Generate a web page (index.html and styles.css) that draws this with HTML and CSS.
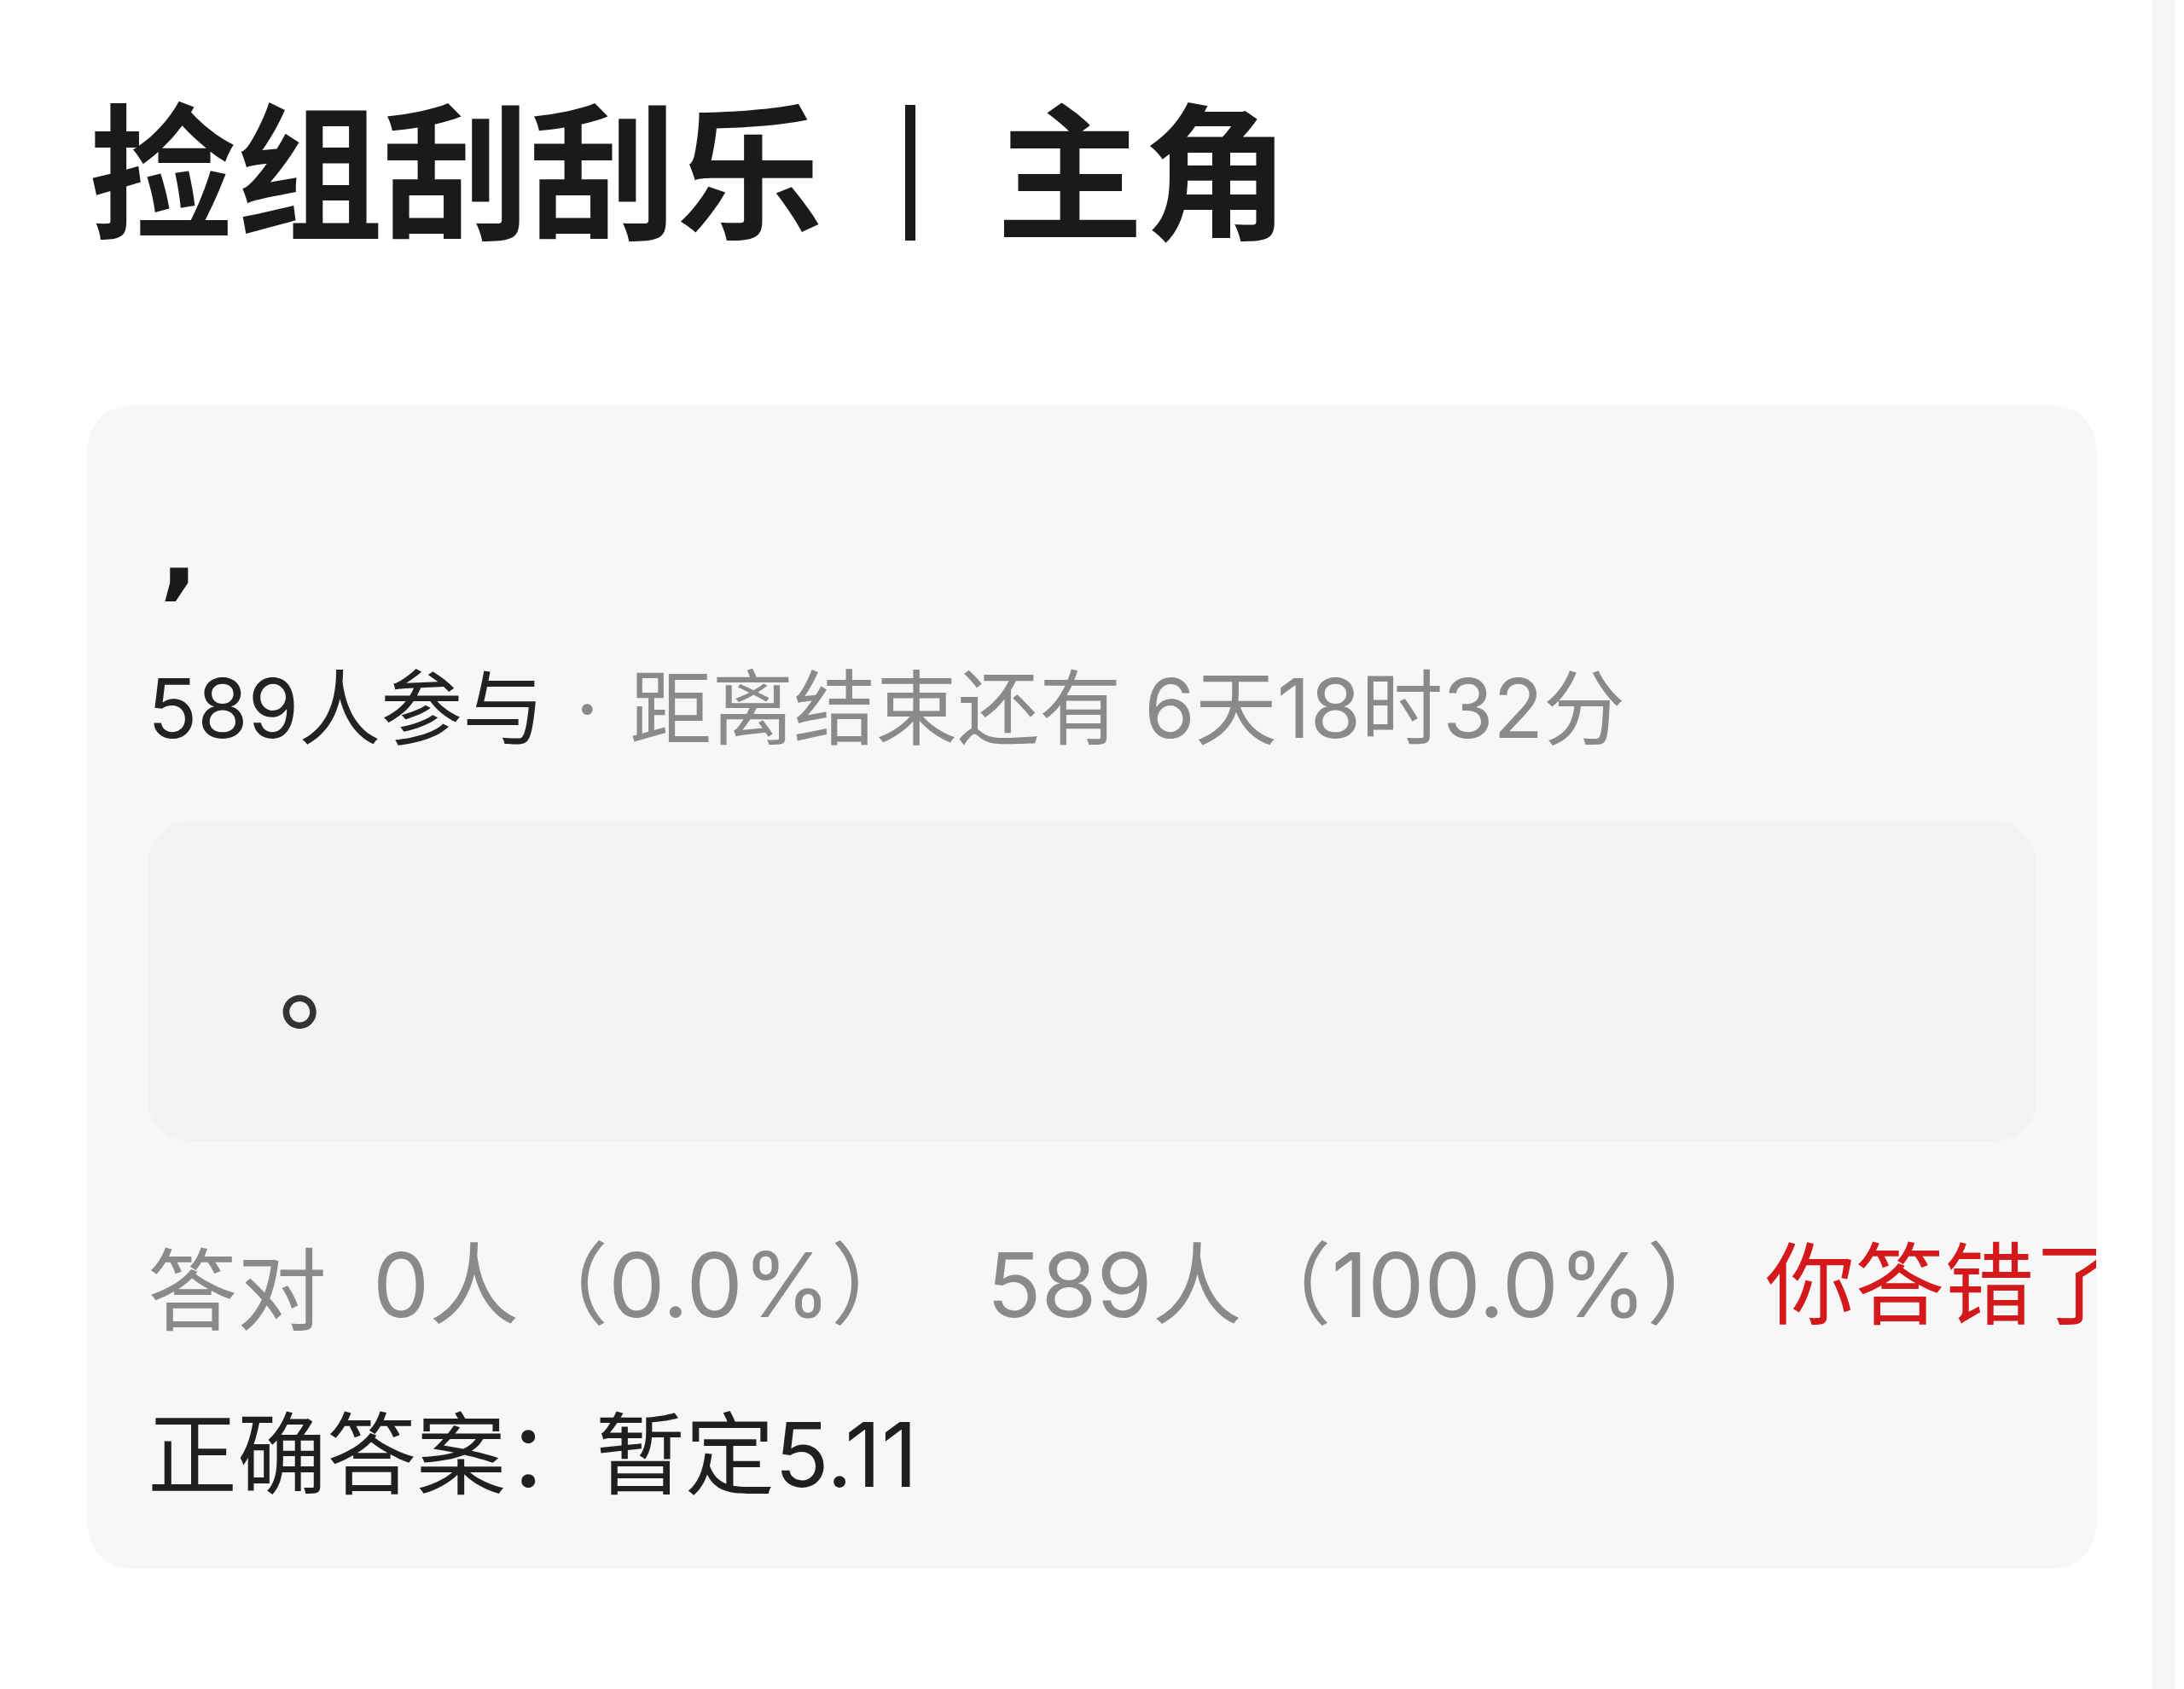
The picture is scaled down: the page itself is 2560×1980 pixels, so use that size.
FILE: index.html
```html
<!DOCTYPE html>
<html lang="zh-CN">
<head>
<meta charset="utf-8">
<title>捡组刮刮乐 | 主角</title>
<link rel="stylesheet" href="styles.css">
</head>
<body>
<div class="screen">
  <main class="main">
    <h1 class="title"><span>捡组刮刮乐</span><span class="divider"></span><span>主角</span></h1>
    <section class="card">
      <div class="question">,</div>
      <div class="meta"><span class="count">589人参与</span><span class="sep">·</span><span class="remain">距离结束还有 6天18时32分</span></div>
      <div class="option"><span class="option-text">。</span></div>
      <div class="stats">
        <span class="label">答对</span>
        <span class="right">0人（0.0%）</span>
        <span class="wrong">589人（100.0%）</span>
        <span class="verdict">你答错了</span>
      </div>
      <div class="answer">正确答案：暂定5.11</div>
    </section>
  </main>
  <div class="scrollbar"></div>
</div>
</body>
</html>
```

FILE: styles.css
```css
html, body {
  margin: 0;
  padding: 0;
  background: #ffffff;
}

body {
  width: 2560px;
  height: 1980px;
  overflow: hidden;
  font-family: "Noto Sans CJK SC", "Noto Sans", sans-serif;
  color: #1f1f1f;
}

.screen {
  display: grid;
  grid-template-columns: 2522px 28px 10px;
  height: 1980px;
}

.main {
  padding-left: 103px;
  padding-top: 106px;
  width: 2354px;
}

.scrollbar {
  background: #f5f5f5;
}

.title {
  margin: 0;
  display: flex;
  align-items: flex-start;
  font-size: 172px;
  line-height: 1;
  font-weight: 700;
  color: #1a1a1a;
  padding-left: 2px;
  white-space: nowrap;
}

.divider {
  display: block;
  width: 12px;
  height: 159px;
  margin: 17px 95px 0 96px;
  background: #1a1a1a;
}

.card {
  margin-top: 193px;
  background: #f7f7f7;
  border-radius: 50px;
  padding: 112px 70px 82px 70px;
  overflow: hidden;
  display: flex;
  flex-direction: column;
}

.question {
  font-family: "DejaVu Sans", sans-serif;
  font-size: 120px;
  line-height: 1;
  font-weight: 700;
  color: #1a1a1a;
  padding-left: 14px;
}

.meta {
  margin-top: 75px;
  font-family: Inter, "Noto Sans CJK SC", sans-serif;
  font-size: 96px;
  line-height: 1;
  white-space: nowrap;
}

.count {
  color: #222222;
}

.sep {
  display: inline-block;
  width: 100px;
  text-align: center;
  color: #8a8a8a;
}

.remain {
  color: #8a8a8a;
}

.option {
  margin-top: 85px;
  height: 359px;
  padding-bottom: 16px;
  background: #f2f2f2;
  border-radius: 50px;
  display: flex;
  align-items: center;
  padding-left: 154px;
}

.option-text {
  font-size: 125px;
  line-height: 1;
  font-weight: 500;
  color: #333333;
}

.stats {
  margin-top: 115px;
  font-family: Inter, "Noto Sans CJK SC", sans-serif;
  font-size: 105px;
  line-height: 1;
  color: #8a8a8a;
  display: flex;
  white-space: nowrap;
}

.label {
  font-family: "Noto Sans CJK SC", sans-serif;
}

.right {
  margin-left: 54px;
}

.wrong {
  margin-left: 78px;
}

.verdict {
  margin-left: 34px;
  color: #d3191c;
}

.answer {
  margin-top: 94px;
  font-family: Inter, "Noto Sans CJK SC", sans-serif;
  font-size: 105px;
  line-height: 1;
  color: #1f1f1f;
  white-space: nowrap;
}
```
